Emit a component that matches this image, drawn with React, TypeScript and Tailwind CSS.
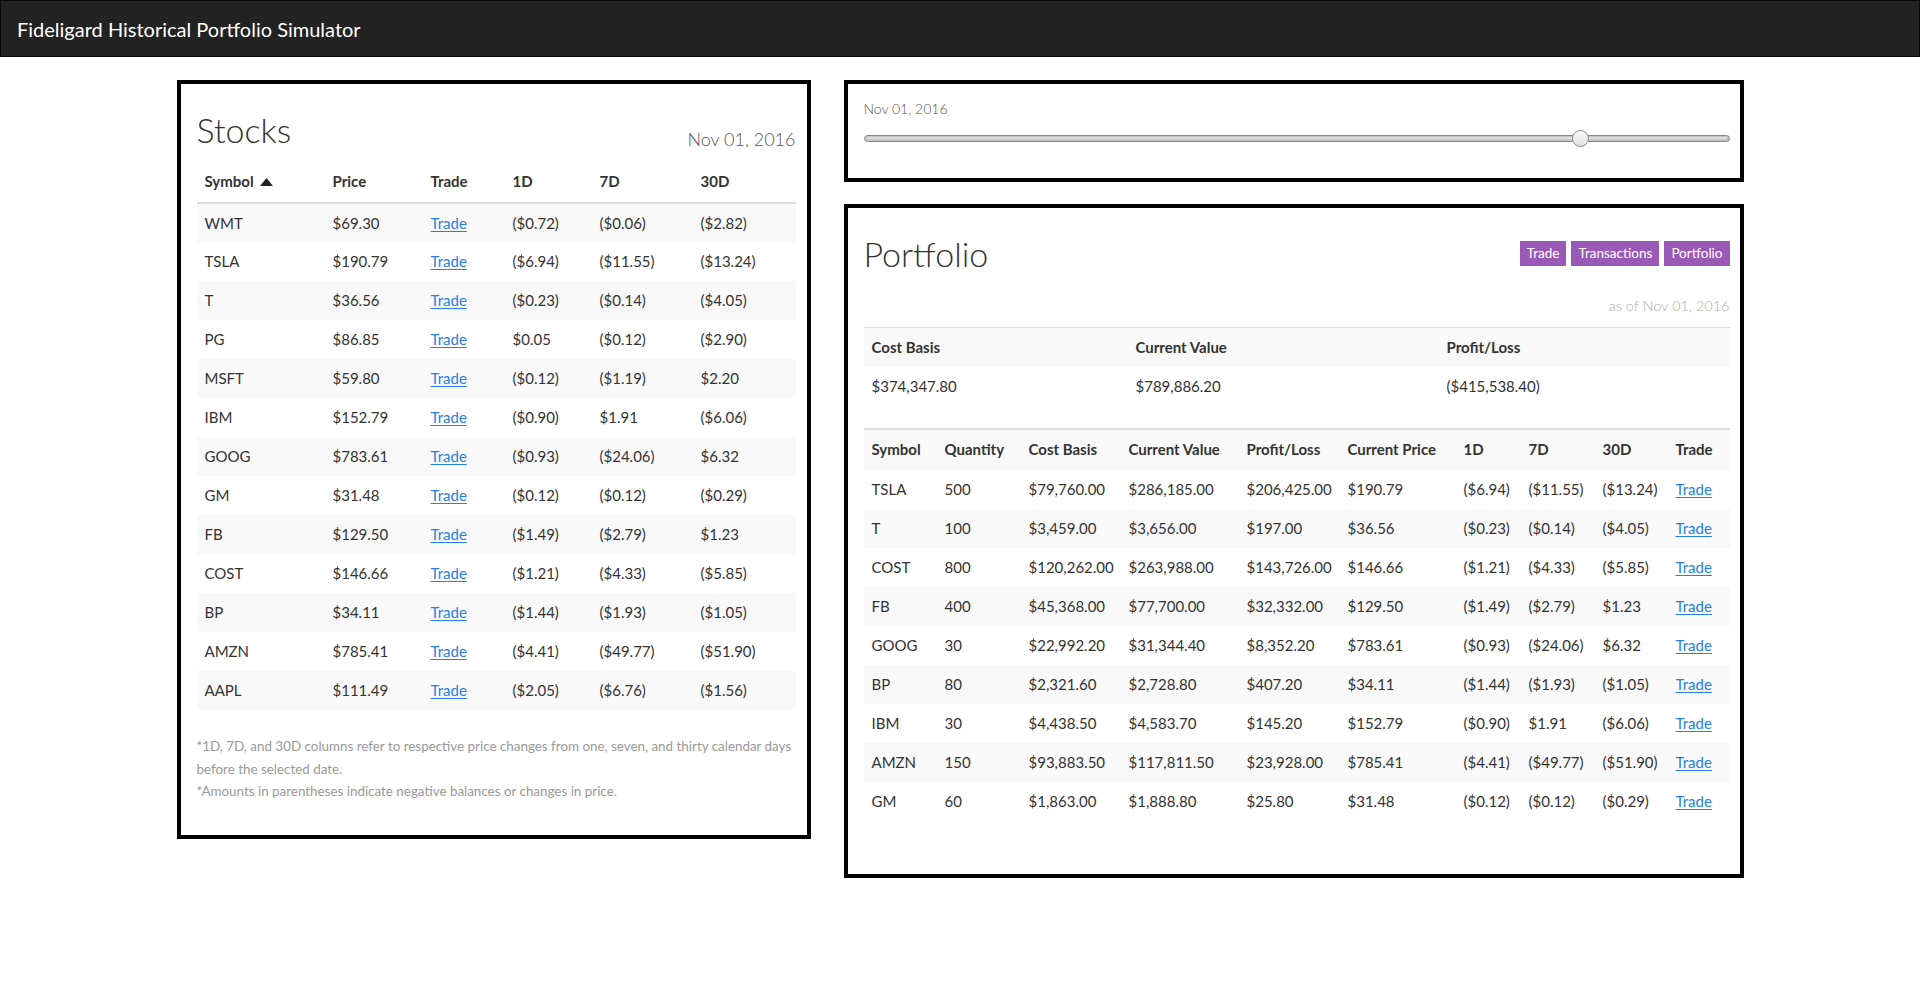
import React from "react";

const stocks = [
  ["WMT", "$69.30", "($0.72)", "($0.06)", "($2.82)"],
  ["TSLA", "$190.79", "($6.94)", "($11.55)", "($13.24)"],
  ["T", "$36.56", "($0.23)", "($0.14)", "($4.05)"],
  ["PG", "$86.85", "$0.05", "($0.12)", "($2.90)"],
  ["MSFT", "$59.80", "($0.12)", "($1.19)", "$2.20"],
  ["IBM", "$152.79", "($0.90)", "$1.91", "($6.06)"],
  ["GOOG", "$783.61", "($0.93)", "($24.06)", "$6.32"],
  ["GM", "$31.48", "($0.12)", "($0.12)", "($0.29)"],
  ["FB", "$129.50", "($1.49)", "($2.79)", "$1.23"],
  ["COST", "$146.66", "($1.21)", "($4.33)", "($5.85)"],
  ["BP", "$34.11", "($1.44)", "($1.93)", "($1.05)"],
  ["AMZN", "$785.41", "($4.41)", "($49.77)", "($51.90)"],
  ["AAPL", "$111.49", "($2.05)", "($6.76)", "($1.56)"],
];

const holdings = [
  ["TSLA", "500", "$79,760.00", "$286,185.00", "$206,425.00", "$190.79", "($6.94)", "($11.55)", "($13.24)"],
  ["T", "100", "$3,459.00", "$3,656.00", "$197.00", "$36.56", "($0.23)", "($0.14)", "($4.05)"],
  ["COST", "800", "$120,262.00", "$263,988.00", "$143,726.00", "$146.66", "($1.21)", "($4.33)", "($5.85)"],
  ["FB", "400", "$45,368.00", "$77,700.00", "$32,332.00", "$129.50", "($1.49)", "($2.79)", "$1.23"],
  ["GOOG", "30", "$22,992.20", "$31,344.40", "$8,352.20", "$783.61", "($0.93)", "($24.06)", "$6.32"],
  ["BP", "80", "$2,321.60", "$2,728.80", "$407.20", "$34.11", "($1.44)", "($1.93)", "($1.05)"],
  ["IBM", "30", "$4,438.50", "$4,583.70", "$145.20", "$152.79", "($0.90)", "$1.91", "($6.06)"],
  ["AMZN", "150", "$93,883.50", "$117,811.50", "$23,928.00", "$785.41", "($4.41)", "($49.77)", "($51.90)"],
  ["GM", "60", "$1,863.00", "$1,888.80", "$25.80", "$31.48", "($0.12)", "($0.12)", "($0.29)"],
];

const holdingCols = [
  { label: "Symbol", w: "w-[73px]" },
  { label: "Quantity", w: "w-[84px]" },
  { label: "Cost Basis", w: "w-[100px]" },
  { label: "Current Value", w: "w-[118px]" },
  { label: "Profit/Loss", w: "w-[101px]" },
  { label: "Current Price", w: "w-[116px]" },
  { label: "1D", w: "w-[65px]" },
  { label: "7D", w: "w-[74px]" },
  { label: "30D", w: "w-[73px]" },
  { label: "Trade", w: "w-[62px]" },
];

function TradeLink() {
  return (
    <a href="#" className="text-[#2780e3] underline underline-offset-2">
      Trade
    </a>
  );
}

function StocksPanel() {
  return (
    <div className="w-[634px] self-start border-4 border-black pl-4 pr-[11px] pb-[32px]">
      <div className="flex items-end justify-between pt-[25px]">
        <h1 className="text-[34px] font-light leading-[42px] text-[#333]">Stocks</h1>
        <span className="text-[18px] font-light leading-[24px] text-[#555]">Nov 01, 2016</span>
      </div>
      <table className="mt-[14px] w-full table-fixed border-collapse text-left text-[15px] text-[#333]">
        <thead>
          <tr className="h-[38px] border-b-2 border-[#ddd]">
            <th className="w-[128px] px-2 pb-[4px] font-bold">
              <span className="inline-flex items-center gap-[6px]">
                Symbol
                <svg width="13" height="8" viewBox="0 0 13 8">
                  <path d="M6.5 0 L13 8 L0 8 Z" fill="#222" />
                </svg>
              </span>
            </th>
            <th className="w-[98px] px-2 pb-[4px] font-bold">Price</th>
            <th className="w-[82px] px-2 pb-[4px] font-bold">Trade</th>
            <th className="w-[87px] px-2 pb-[4px] font-bold">1D</th>
            <th className="w-[101px] px-2 pb-[4px] font-bold">7D</th>
            <th className="w-[103px] px-2 pb-[4px] font-bold">30D</th>
          </tr>
        </thead>
        <tbody>
          {stocks.map((s, i) => (
            <tr key={s[0]} className={i % 2 === 0 ? "h-[39px] bg-[#f9f9f9]" : "h-[39px]"}>
              <td className="px-2">{s[0]}</td>
              <td className="px-2">{s[1]}</td>
              <td className="px-2">
                <TradeLink />
              </td>
              <td className="px-2">{s[2]}</td>
              <td className="px-2">{s[3]}</td>
              <td className="px-2">{s[4]}</td>
            </tr>
          ))}
        </tbody>
      </table>
      <div className="mt-[25px] text-[13.4px] leading-[22.5px] text-[#999]">
        <p>
          <span className="whitespace-nowrap">
            *1D, 7D, and 30D columns refer to respective price changes from one, seven, and thirty calendar days
          </span>
          <br />
          before the selected date.
        </p>
        <p>*Amounts in parentheses indicate negative balances or changes in price.</p>
      </div>
    </div>
  );
}

function SliderPanel() {
  return (
    <div className="h-[102px] border-4 border-black pl-4 pr-[10px] pt-[16px]">
      <div className="text-[14px] font-light leading-[18px] text-[#555]">Nov 01, 2016</div>
      <div className="relative mt-[17px] h-[7px] rounded-full border border-[#888] bg-[#c4c4c4]">
        <div className="mx-[2px] mt-[1px] h-[2px] rounded-full bg-[#dcdcdc]" />
        <div className="absolute left-[707px] top-[-6px] h-[17px] w-[17px] rounded-full border border-[#8a8a8a] bg-gradient-to-b from-[#fafafa] to-[#e2e2e2]" />
      </div>
    </div>
  );
}

function PortfolioPanel() {
  return (
    <div className="h-[674px] border-4 border-black pl-4 pr-[10px]">
      <div className="flex h-[67px] items-start justify-between pt-[25px]">
        <h1 className="text-[34px] font-light leading-[42px] text-[#333]">Portfolio</h1>
        <div className="mt-[8px] flex gap-[5px] text-[13.5px] leading-[25px] text-white">
          <button className="h-[25px] bg-[#9b59b6] px-[7px]">Trade</button>
          <button className="h-[25px] bg-[#9b59b6] px-[7px]">Transactions</button>
          <button className="h-[25px] bg-[#9b59b6] px-[7px]">Portfolio</button>
        </div>
      </div>
      <div className="mt-[21px] text-right text-[14.5px] font-light leading-[20px] text-[#aaa]">as of Nov 01, 2016</div>
      <table className="mt-[11px] w-full table-fixed border-collapse text-left text-[15px] text-[#333]">
        <tbody>
          <tr className="h-[39px] border-t border-[#ddd] bg-[#f9f9f9]">
            <th className="w-[264px] px-2 font-bold">Cost Basis</th>
            <th className="w-[311px] px-2 font-bold">Current Value</th>
            <th className="px-2 font-bold">Profit/Loss</th>
          </tr>
          <tr className="h-[39px]">
            <td className="px-2">$374,347.80</td>
            <td className="px-2">$789,886.20</td>
            <td className="px-2">($415,538.40)</td>
          </tr>
        </tbody>
      </table>
      <table className="mt-[22px] w-full table-fixed border-collapse text-left text-[15px] text-[#333]">
        <tbody>
          <tr className="h-[41px] border-t-2 border-[#ddd] bg-[#f9f9f9]">
            {holdingCols.map((c) => (
              <th key={c.label} className={`${c.w} whitespace-nowrap px-2 font-bold`}>
                {c.label}
              </th>
            ))}
          </tr>
          {holdings.map((h, i) => (
            <tr key={h[0]} className={i % 2 === 1 ? "h-[39px] bg-[#f9f9f9]" : "h-[39px]"}>
              {h.map((v, j) => (
                <td key={j} className="whitespace-nowrap px-2">
                  {v}
                </td>
              ))}
              <td className="px-2">
                <TradeLink />
              </td>
            </tr>
          ))}
        </tbody>
      </table>
    </div>
  );
}

export default function App() {
  return (
    <div className="min-h-[983px] bg-white font-['Lato',sans-serif]">
      <div className="flex h-[57px] items-center border border-[#080808] bg-[#222] pl-4">
        <span className="text-[20px] text-white">Fideligard Historical Portfolio Simulator</span>
      </div>
      <div className="flex justify-center gap-[33px] pt-[23px]">
        <StocksPanel />
        <div className="flex w-[900px] flex-col gap-[22px]">
          <SliderPanel />
          <PortfolioPanel />
        </div>
      </div>
    </div>
  );
}
